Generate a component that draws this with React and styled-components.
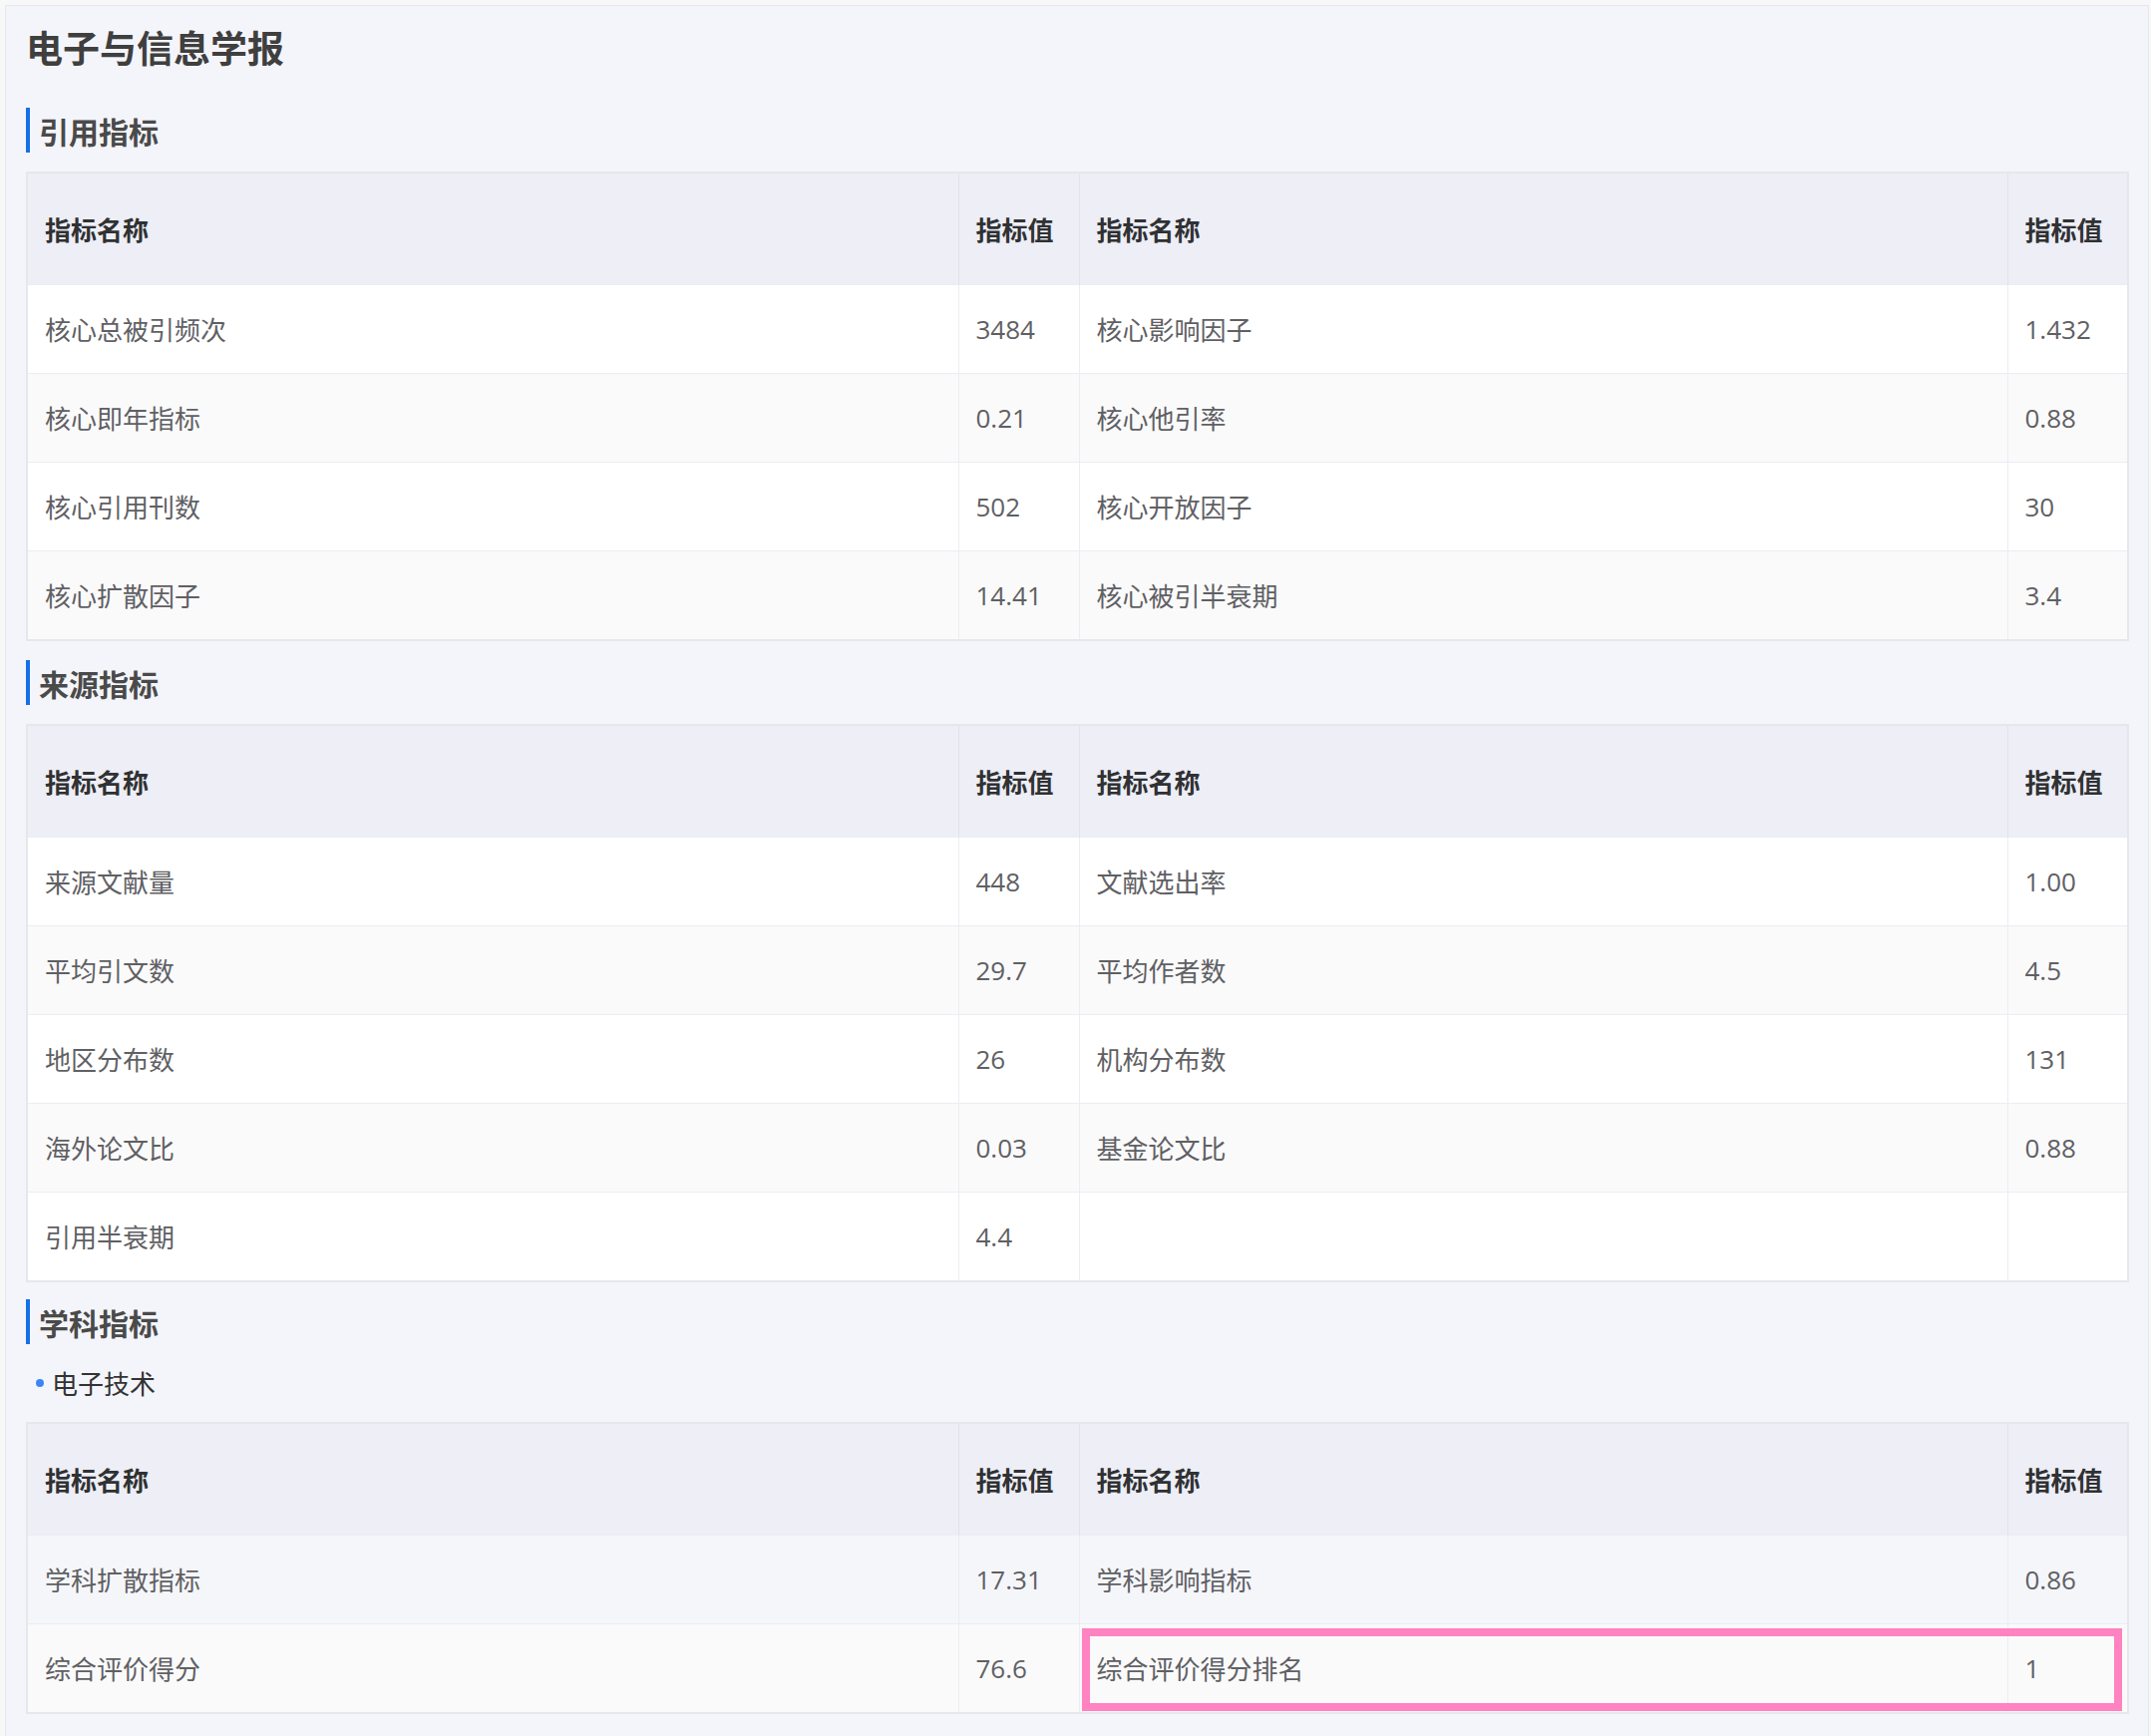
import styled, { createGlobalStyle } from "styled-components";

const GlobalStyle = createGlobalStyle`
html, body {
  margin: 0;
  padding: 0;
  background: #f8f8f9;
}
body {
  font-family: "Open Sans", "Noto Sans CJK SC", sans-serif;
}
`

const Page = styled.div`
padding: 5px 2px 0 5px;
`
const Frame = styled.div`
background: #f4f5fa;
border: 1px solid #e6e7ec;
border-bottom: none;
padding: 15px 21px 25px 20px;
`
const Title = styled.h1`
margin: 0;
font-size: 37px;
line-height: 52px;
font-weight: 700;
color: #3f3f3f;
font-family: "Noto Sans CJK SC", sans-serif;
`
const Section = styled.h2`
display: flex;
align-items: center;
height: 45px;
margin: ${p => p.$top}px 0 19px;
padding-left: 9px;
border-left: 4px solid #1570e8;
font-size: 30px;
font-weight: 700;
color: #4a4a4a;
font-family: "Noto Sans CJK SC", sans-serif;
`
const SubTitle = styled.div`
display: flex;
align-items: center;
gap: 8px;
margin: 21px 0 21px 10px;
font-size: 26px;
line-height: 36px;
color: #333;
font-family: "Noto Sans CJK SC", sans-serif;

&::before {
  content: '';
  width: 8px;
  height: 8px;
  border-radius: 50%;
  background: #3b86f7;
}
`
const Table = styled.table`
width: 2107px;
table-layout: fixed;
border-collapse: collapse;
border: 2px solid #e6e7ec;
`
const Th = styled.th`
height: 111px;
padding: 0 17px;
text-align: left;
font-size: 26px;
font-weight: 700;
color: #303133;
background: #edeef6;
border-left: 1px solid #e3e4e9;
font-family: "Noto Sans CJK SC", sans-serif;
`
const Row = styled.tr`
background: ${p => p.$hover ? "#f5f6fa" : p.$odd ? "#fafafa" : "#fff"};
border-top: 1px solid #ebedf4;
`
const Td = styled.td`
height: 88px;
padding: 0 17px;
font-size: 26px;
color: #5f6064;
border-left: 1px solid #ebedf4;
position: relative;
`
// pink highlight drawn over the last pair of cells
const Mark = styled.span`
position: absolute;
left: 2px;
top: 4px;
bottom: 1px;
width: calc(100% + 113px);
border: 8px solid #ff82c1;
box-sizing: border-box;
pointer-events: none;
`

const cite = [
  ["核心总被引频次", "3484", "核心影响因子", "1.432"],
  ["核心即年指标", "0.21", "核心他引率", "0.88"],
  ["核心引用刊数", "502", "核心开放因子", "30"],
  ["核心扩散因子", "14.41", "核心被引半衰期", "3.4"],
]
const source = [
  ["来源文献量", "448", "文献选出率", "1.00"],
  ["平均引文数", "29.7", "平均作者数", "4.5"],
  ["地区分布数", "26", "机构分布数", "131"],
  ["海外论文比", "0.03", "基金论文比", "0.88"],
  ["引用半衰期", "4.4", "", ""],
]
const subject = [
  ["学科扩散指标", "17.31", "学科影响指标", "0.86"],
  ["综合评价得分", "76.6", "综合评价得分排名", "1"],
]

const MetricTable = ({ rows, hoverFirst, markLast }) => (
  <Table>
    <colgroup>
      <col style={{ width: 934 }} />
      <col style={{ width: 121 }} />
      <col style={{ width: 931 }} />
      <col style={{ width: 121 }} />
    </colgroup>
    <thead>
      <tr>
        <Th>指标名称</Th>
        <Th>指标值</Th>
        <Th>指标名称</Th>
        <Th>指标值</Th>
      </tr>
    </thead>
    <tbody>
      {rows.map((r, i) => (
        <Row key={i} $odd={i % 2 === 1} $hover={hoverFirst && i === 0}>
          <Td>{r[0]}</Td>
          <Td>{r[1]}</Td>
          <Td>
            {markLast && i === rows.length - 1 && <Mark />}
            {r[2]}
          </Td>
          <Td>{r[3]}</Td>
        </Row>
      ))}
    </tbody>
  </Table>
)

const App = () => {
  return (
    <Page>
      <GlobalStyle />
      <Frame>
        <Title>电子与信息学报</Title>
        <Section $top={35}>引用指标</Section>
        <MetricTable rows={cite} />
        <Section $top={19}>来源指标</Section>
        <MetricTable rows={source} />
        <Section $top={17}>学科指标</Section>
        <SubTitle>电子技术</SubTitle>
        <MetricTable rows={subject} hoverFirst markLast />
      </Frame>
    </Page>
  )
}

export default App
